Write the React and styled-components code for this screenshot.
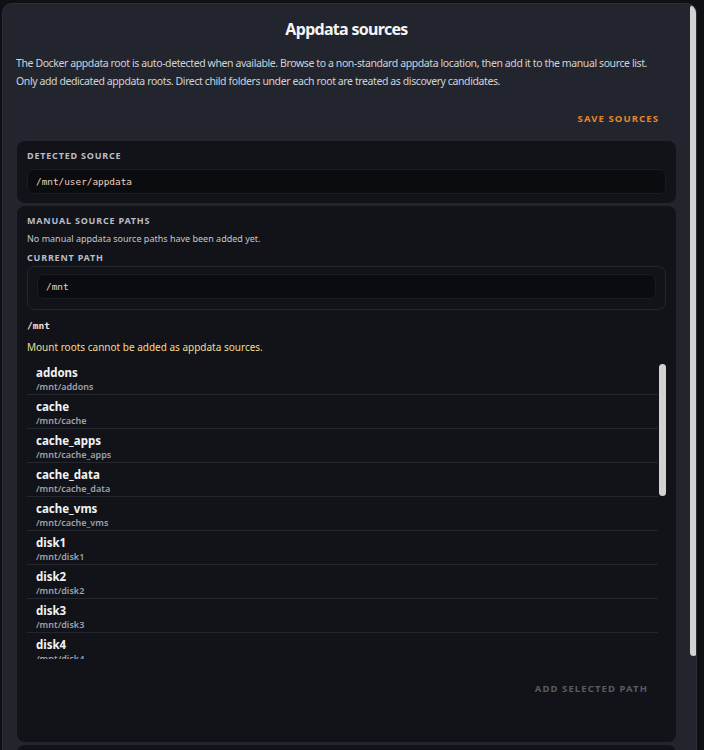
import React from "react";
import styled, { createGlobalStyle } from "styled-components";

const GlobalStyle = createGlobalStyle`
  html, body {
    margin: 0;
    padding: 0;
    background: #0e1014;
    overflow: hidden;
  }
  * {
    box-sizing: border-box;
  }
`;

const folders = [
  "addons",
  "cache",
  "cache_apps",
  "cache_data",
  "cache_vms",
  "disk1",
  "disk2",
  "disk3",
  "disk4",
  "disk5",
  "disk6",
  "disk7",
  "disk8",
  "disk9",
  "disk10",
  "disks",
  "remotes",
  "rootshare",
  "user",
  "user0",
];

const App = () => {
  return (
    <Page>
      <GlobalStyle />
      <Modal>
        <Title>Appdata sources</Title>
        <Intro>
          The Docker appdata root is auto-detected when available. Browse to a
          non-standard appdata location, then add it to the manual source list.
          <br />
          Only add dedicated appdata roots. Direct child folders under each root
          are treated as discovery candidates.
        </Intro>

        <Actions>
          <TextButton>Save sources</TextButton>
        </Actions>

        <Card>
          <Label>Detected source</Label>
          <PathField>/mnt/user/appdata</PathField>
        </Card>

        <Card $grow>
          <Label>Manual source paths</Label>
          <Note>No manual appdata source paths have been added yet.</Note>
          <Label $tight>Current path</Label>
          <FieldFrame>
            <PathField>/mnt</PathField>
          </FieldFrame>
          <CurrentDir>/mnt</CurrentDir>
          <Warning>Mount roots cannot be added as appdata sources.</Warning>

          <FolderList>
            <FolderItems>
              {folders.map((name) => (
                <FolderRow key={name}>
                  <FolderName>{name}</FolderName>
                  <FolderPath>/mnt/{name}</FolderPath>
                </FolderRow>
              ))}
            </FolderItems>
            <ScrollThumb $top={3} $height={132} $right={0} />
          </FolderList>

          <Actions $bottom>
            <TextButton disabled>Add selected path</TextButton>
          </Actions>
        </Card>

        <Card>
          <Label>Appdata locations</Label>
          <Note>Select a source to review its discovery candidates.</Note>
        </Card>

        <ScrollThumb $top={1} $height={651} $right={-1} />
      </Modal>
    </Page>
  );
};

export default App;

const Page = styled.div`
  height: 750px;
  padding: 3px 7px 0 2px;
  font-family: "Noto Sans", "DejaVu Sans", sans-serif;
`;

const Modal = styled.div`
  position: relative;
  height: 747px;
  background: #22252d;
  border: 1px solid #2a2e37;
  border-bottom: none;
  border-radius: 10px 10px 0 0;
  padding: 0 20px 0 14px;
  overflow: hidden;
  color: #d6d9df;
`;

const ScrollThumb = styled.div`
  position: absolute;
  top: ${(p) => p.$top}px;
  right: ${(p) => p.$right}px;
  width: 7px;
  height: ${(p) => p.$height}px;
  background: #d2d2d2;
  border-radius: 4px;
`;

const Title = styled.h2`
  margin: 0;
  padding: 14px 0 0;
  text-align: center;
  font-size: 16px;
  line-height: 22px;
  font-weight: 700;
  letter-spacing: -0.7px;
  color: #f4f5f7;
`;

const Intro = styled.p`
  margin: 14px 0 0 -1px;
  font-size: 10.5px;
  line-height: 18px;
  letter-spacing: -0.4px;
  color: #d0d3d9;
`;

const Actions = styled.div`
  display: flex;
  justify-content: flex-end;
  padding: ${(p) => (p.$bottom ? "19px 18px 0 0" : "18px 17px 12px 0")};
`;

const TextButton = styled.button`
  background: transparent;
  border: none;
  padding: 4px 0;
  font-family: "Noto Sans", "DejaVu Sans", sans-serif;
  font-size: 9.5px;
  font-weight: 700;
  letter-spacing: 1.1px;
  text-transform: uppercase;
  color: ${(p) => (p.disabled ? "#585b63" : "#e8852a")};
  cursor: pointer;
`;

const Card = styled.section`
  background: #111318;
  border-radius: 8px;
  padding: 9px 10px 9px 10px;
  margin-bottom: 3px;
  min-height: ${(p) => (p.$grow ? "536px" : "0")};
`;

const Label = styled.div`
  font-size: 9px;
  line-height: 12px;
  font-weight: 700;
  letter-spacing: 0.8px;
  text-transform: uppercase;
  color: #b9bdc6;
  margin: 0 0 ${(p) => (p.$tight ? "2px" : "7px")};
`;

const Note = styled.div`
  font-size: 9px;
  line-height: 12px;
  color: #c3c7cf;
  margin: -1px 0 7px;
`;

const PathField = styled.div`
  height: 25px;
  display: flex;
  align-items: center;
  padding: 0 8px;
  background: #0b0c10;
  border: 1px solid #1a1c22;
  border-radius: 7px;
  font-family: "DejaVu Sans Mono", "Liberation Mono", monospace;
  font-size: 9.4px;
  color: #f1d2b8;
`;

const FieldFrame = styled.div`
  border: 1px solid #23262d;
  border-radius: 8px;
  padding: 7px 9px 10px;
`;

const CurrentDir = styled.div`
  margin-top: 10px;
  font-family: "DejaVu Sans Mono", "Liberation Mono", monospace;
  font-size: 9.5px;
  font-weight: 700;
  line-height: 12px;
  color: #f3e3d6;
`;

const Warning = styled.div`
  margin-top: 9px;
  font-size: 10px;
  line-height: 13px;
  color: #f1dc94;
`;

const FolderList = styled.div`
  position: relative;
  margin-top: 7px;
  height: 298px;
  padding-right: 8px;
  overflow: hidden;
`;

const FolderItems = styled.div`
  display: flex;
  flex-direction: column;
`;

const FolderRow = styled.div`
  display: flex;
  flex-direction: column;
  flex: 0 0 34px;
  padding: 4px 9px 0;
  border-bottom: 1px solid #23262d;
`;

const FolderName = styled.div`
  font-size: 11.5px;
  line-height: 15px;
  font-weight: 700;
  color: #f2f3f5;
`;

const FolderPath = styled.div`
  font-size: 9px;
  line-height: 13px;
  font-weight: 600;
  color: #9ca1ab;
`;
